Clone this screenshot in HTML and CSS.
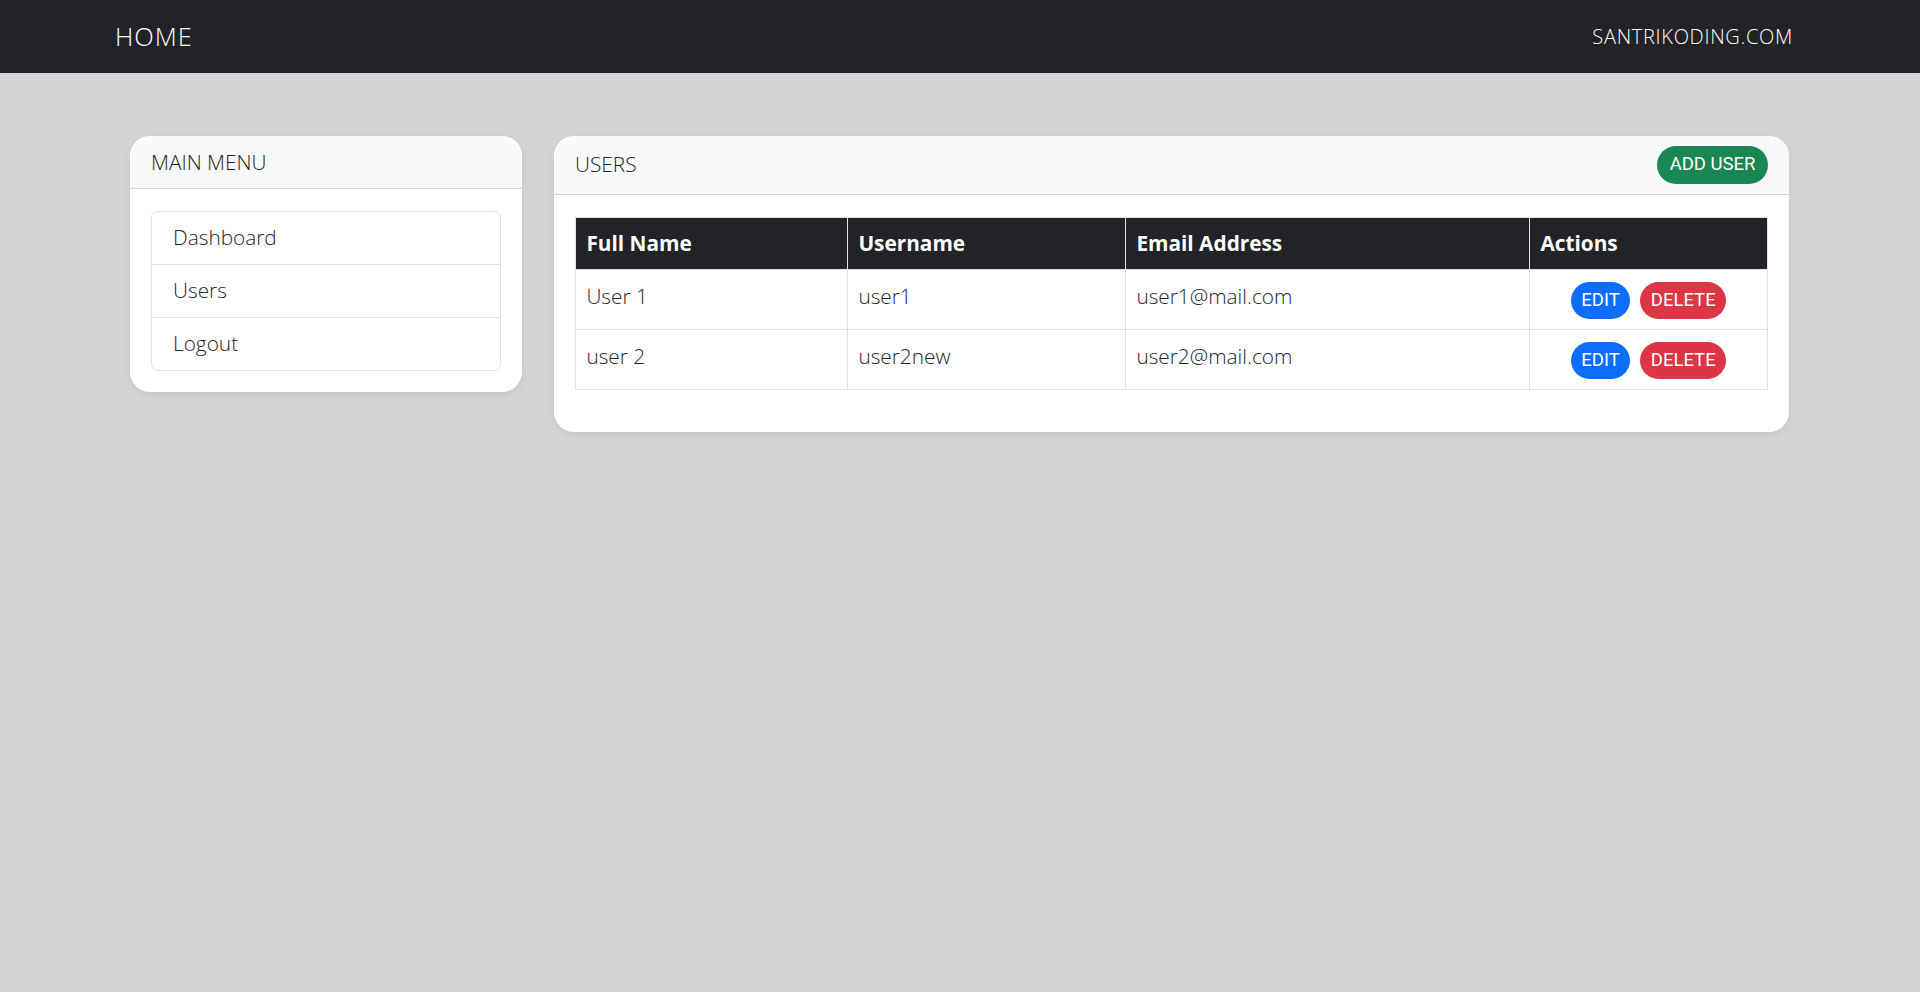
FILE: index.html
```html
<!DOCTYPE html>
<html lang="en">
<head>
<meta charset="utf-8">
<title>Users</title>
<link rel="stylesheet" href="styles.css">
</head>
<body>
<nav class="navbar">
  <a class="brand" href="#">HOME</a>
  <a class="site" href="#">SANTRIKODING.COM</a>
</nav>
<main class="container">
  <aside class="card side">
    <div class="card-header">MAIN MENU</div>
    <div class="card-body">
      <ul class="list-group">
        <li class="list-item">Dashboard</li>
        <li class="list-item">Users</li>
        <li class="list-item">Logout</li>
      </ul>
    </div>
  </aside>
  <section class="card content">
    <div class="card-header head-flex">
      <span>USERS</span>
      <a class="btn btn-green" href="#">ADD USER</a>
    </div>
    <div class="card-body">
      <table class="table">
        <thead>
          <tr>
            <th class="c1">Full Name</th>
            <th class="c2">Username</th>
            <th class="c3">Email Address</th>
            <th class="c4">Actions</th>
          </tr>
        </thead>
        <tbody>
          <tr>
            <td>User 1</td>
            <td>user1</td>
            <td>user1@mail.com</td>
            <td class="actions"><a class="btn btn-blue" href="#">EDIT</a><a class="btn btn-red" href="#">DELETE</a></td>
          </tr>
          <tr>
            <td>user 2</td>
            <td>user2new</td>
            <td>user2@mail.com</td>
            <td class="actions"><a class="btn btn-blue" href="#">EDIT</a><a class="btn btn-red" href="#">DELETE</a></td>
          </tr>
        </tbody>
      </table>
    </div>
  </section>
</main>
</body>
</html>
```
FILE: styles.css
```css
* { box-sizing: border-box; }
html, body { margin: 0; padding: 0; }
body {
  background: #d3d4d6;
  font-family: "Open Sans", "Noto Sans", sans-serif;
  font-weight: 300;
  font-size: 20.8px;
  line-height: 31.2px;
  color: #212529;
  min-height: 992px;
}
a { text-decoration: none; }

.navbar {
  height: 73px;
  background: #222327;
  display: flex;
  align-items: center;
  justify-content: space-between;
  padding: 0 127px 0 115px;
}
.brand { color: #fff; font-size: 25.5px; letter-spacing: 1px; }
.site { color: #fff; font-size: 20px; letter-spacing: 0.7px; }

.container {
  display: flex;
  align-items: flex-start;
  gap: 32px;
  padding: 63px 0 0 130px;
  width: 1789px;
}
.card {
  background: #fff;
  border-radius: 20px;
  box-shadow: 0 2px 6px rgba(0,0,0,0.08);
  overflow: hidden;
}
.side { width: 392px; flex: none; }
.content { flex: 1; }
.card-header {
  background: #f8f9fa;
  border-bottom: 1px solid #d4d5d7;
  padding: 10.5px 21px;
  height: 52.5px;
  line-height: 31.2px;
}
.head-flex {
  display: flex;
  align-items: center;
  justify-content: space-between;
  height: 58.5px;
  padding: 0 21px;
}
.card-body { padding: 22px 21px 21px; }

.list-group {
  list-style: none;
  margin: 0;
  padding: 0;
  border: 1px solid #dee2e6;
  border-radius: 7px;
}
.list-item {
  padding: 10.4px 21px;
  height: 53px;
  border-top: 1px solid #dee2e6;
}
.list-item:first-child { border-top: 0; height: 52px; }

.table {
  width: 100%;
  border-collapse: collapse;
  margin-bottom: 21px;
  vertical-align: top;
}
.table th, .table td {
  border: 1px solid #dee2e6;
  padding: 10.4px 10.4px;
  text-align: left;
  vertical-align: top;
}
.table th {
  background: #222327;
  color: #fff;
  font-weight: 700;
  height: 52.5px;
}
.table td { height: 60px; }
.c1 { width: 272px; }
.c2 { width: 278px; }
.c3 { width: 404px; }
.table td.actions { text-align: center; padding-top: 11.5px; padding-bottom: 0; }

.btn {
  display: inline-block;
  font-family: Roboto, "Liberation Sans", sans-serif;
  font-weight: 400;
  font-size: 18.5px;
  line-height: 27.5px;
  padding: 5px 10.5px;
  border-radius: 20px;
  color: #fff;
  vertical-align: top;
}
.btn-green { background: #198754; padding: 5px 12.5px; }
.btn-blue { background: #0d6efd; }
.btn-red { background: #dc3545; margin-left: 10px; }
```
